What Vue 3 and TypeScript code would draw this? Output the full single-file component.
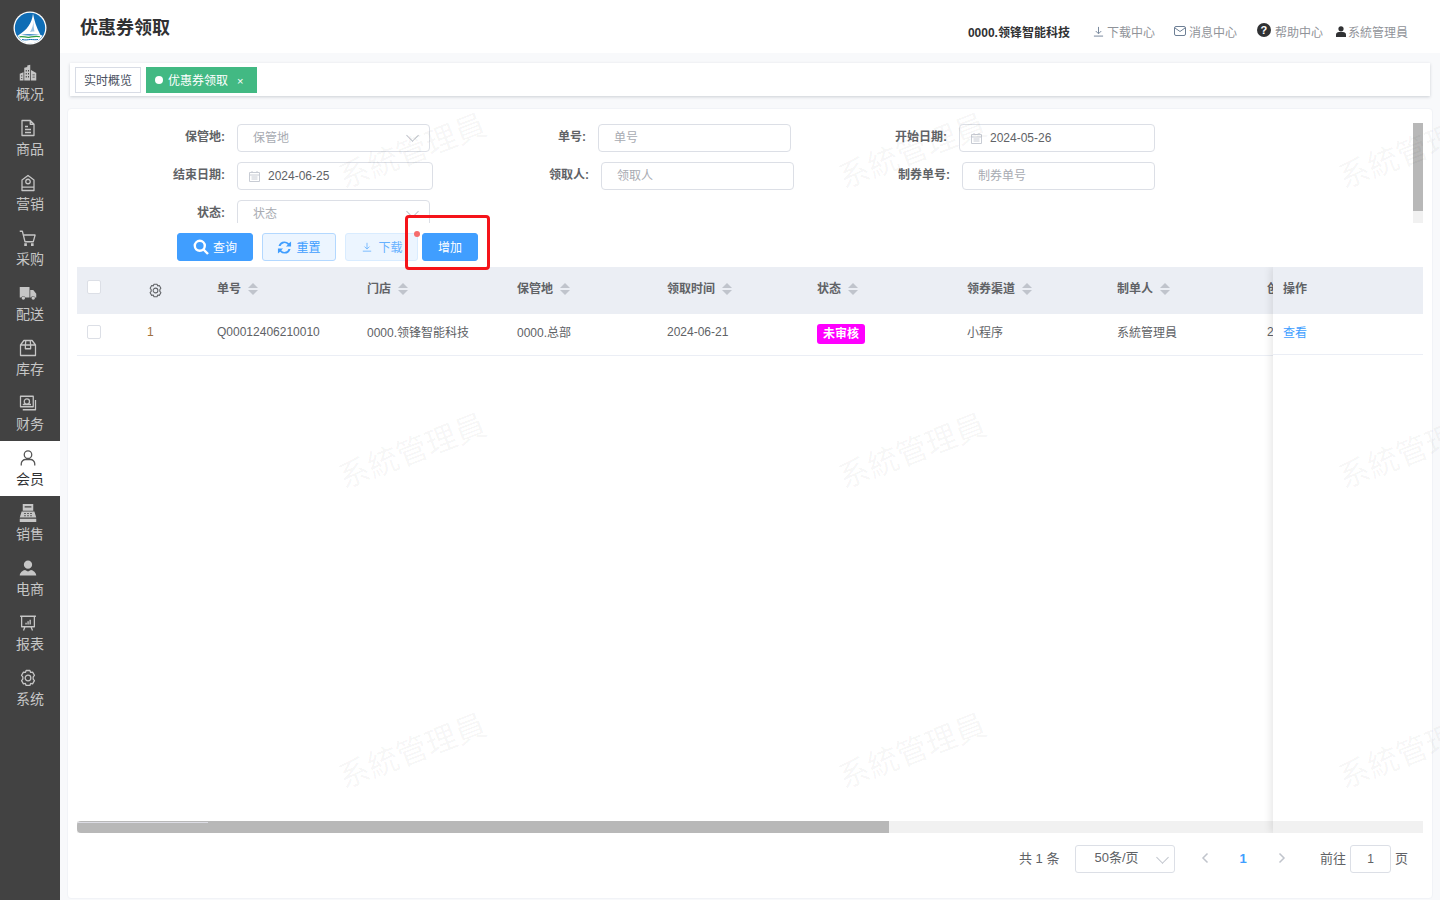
<script setup lang="ts">
interface Shape { d: string; mode: 'stroke' | 'fill' | 'hole' }
interface NavItem { label: string; shapes: Shape[]; active?: boolean }

const s = (d: string): Shape => ({ d, mode: 'stroke' })
const f = (d: string): Shape => ({ d, mode: 'fill' })
const h = (d: string): Shape => ({ d, mode: 'hole' })

const gear = 'M9.5 2h5l1 2.6 2.6-.5 2.5 4.3-1.7 2.1v2.9l1.7 2.1-2.5 4.3-2.6-.5-1 2.6h-5l-1-2.6-2.6.5-2.5-4.3 1.7-2.1V10.500L3.400 8.400l2.500-4.300 2.600.5z M12 8.200a3.800 3.800 0 1 0 0 7.600 3.800 3.800 0 0 0 0-7.600z'

const navItems: NavItem[] = [
  { label: '概况', shapes: [
    f('M1 13l5-2v11H1z M7 5l4-1V2l4-1v21H7z M16 8l7 4v10h-7z'),
    h('M9 8h1.300v2H9z M12 8h1.300v2H12z M9 12h1.300v2H9z M12 12h1.300v2H12z M9 16h1.300v2H9z M12 16h1.300v2H12z M3 15h1.300v1.500H3z M3 18.500h1.300V20H3z M18 14h3v1h-3z M18 17h3v1h-3z'),
  ] },
  { label: '商品', shapes: [ s('M4 2h11l5 5v15H4z M15 2v5h5 M8 10h4 M8 14h8 M8 18h8') ] },
  { label: '营销', shapes: [ s('M4 8l8-6 8 6v14H4z M4 17.500h16'), s('M12 7a3 3 0 1 0 0 6 3 3 0 0 0 0-6z') ] },
  { label: '采购', shapes: [ s('M1 3h3.500L8 17h11l2.500-9H6'), f('M7 19h3.500v3.500H7z M16 19h3.500v3.500H16z') ] },
  { label: '配送', shapes: [
    f('M1 4h13v14H8.500a3 3 0 0 0-5.500 0H1z M15 8h4l4 5v5h-1.500a3 3 0 0 0-5.500 0h-1z'),
    f('M5.800 16.500a2.300 2.300 0 1 0 0 4.600 2.300 2.300 0 0 0 0-4.600z M19 16.500a2.300 2.300 0 1 0 0 4.600 2.300 2.300 0 0 0 0-4.600z'),
  ] },
  { label: '库存', shapes: [ s('M6.500 2h11L22 8v14H2V8z M2 8h20 M9 2.500L8.500 8v5h7V8L15 2.500') ] },
  { label: '财务', shapes: [ s('M2 3h17v14H2z M5 21h17V8'), s('M10.500 6.500a3 3 0 1 0 0 7 3 3 0 0 0 0-7z M5 14h11') ] },
  { label: '会员', active: true, shapes: [ s('M12 2.500a5 5 0 1 0 0 10 5 5 0 0 0 0-10z M3 22v-2.500c0-3 3-5.500 5.500-5.500h7c2.500 0 5.500 2.500 5.500 5.500V22') ] },
  { label: '销售', shapes: [
    f('M5 0h14v9H5z M3.500 10h17L23 18H1z M1 19.500h22V24H1z'),
    h('M7.500 3h9v1.500h-9z M7 12h2v1.300H7z M11 12h2v1.300h-2z M15 12h2v1.300h-2z M7 15h2v1.300H7z M11 15h2v1.300h-2z M15 15h2v1.300h-2z'),
  ] },
  { label: '电商', shapes: [ f('M12 2a5.500 5.500 0 1 0 0 11 5.500 5.500 0 0 0 0-11z M1 22c0-4 4-7 7-7.500l4 2 4-2c3 .5 7 3.500 7 7.500z') ] },
  { label: '报表', shapes: [ s('M1.500 3h21 M3.500 3v14h17V3 M8 17l-2 5 M16 17l2 5'), f('M8.500 11.500h1.800V14H8.500z M11.200 9.500H13V14h-1.800z M14 7.500h1.800V14H14z') ] },
  { label: '系统', shapes: [ s(gear) ] },
]

const columns: string[] = ['单号', '门店', '保管地', '领取时间', '状态', '领券渠道', '制单人', '创建时间']
const watermarks: number[] = Array.from({ length: 9 }, (_, i) => i)
</script>

<template>
  <div class="app">
    <aside class="sidebar">
      <div class="logo">
        <svg width="34" height="34" viewBox="0 0 34 34">
          <circle cx="17" cy="17" r="16.500" fill="#fff" />
          <circle cx="17" cy="17" r="15.200" fill="#0f6db5" />
          <path d="M20 2.500C19 12 14 19 5 24.500c7-1.500 15-1.500 22.500-.5C23.500 17 21 9 20 2.500z" fill="#fff" />
          <path d="M20.500 9c0 5-1.500 9-3.500 12 2-.5 3-.5 4.500-.5-1-3.500-1-8-1-11.500z" fill="#9cc3e2" />
          <path d="M4.500 24.500c5-1 8 0 12 0s8-1 13 0c-2.500 5-7 8-12.500 8S7 29 4.500 24.500z" fill="#fff" />
          <path d="M6.500 25.800c4-1 6 1 9.500.5s7-1.700 11-.5" fill="none" stroke="#2f9e44" stroke-width="1.200" />
          <path d="M9 28.500c4 1 6 0 8.500 0s5 .5 7.500 0" fill="none" stroke="#0f6db5" stroke-width="1" />
        </svg>
      </div>
      <div v-for="item in navItems" :key="item.label" class="nav-item" :class="{ active: item.active }">
        <svg class="nav-icon" width="18" height="18" viewBox="0 0 24 24">
          <path v-for="(shape, i) in item.shapes" :key="i" :d="shape.d" :class="shape.mode" />
        </svg>
        <span class="nav-label">{{ item.label }}</span>
      </div>
    </aside>

    <main class="main">
      <header class="topbar">
        <h1 class="title">优惠券领取</h1>
        <div class="top-actions">
          <span class="org">0000.领锋智能科技</span>
          <span class="action a-download">
            <svg width="11" height="11" viewBox="0 0 12 12" fill="none" stroke="#6d7f95" stroke-width="1"><path d="M6 1v7M3 5.500L6 8.500l3-3M1 11h10" /></svg>
            下载中心
          </span>
          <span class="action a-message">
            <svg width="12" height="10" viewBox="0 0 12 10" fill="none" stroke="#6d7f95" stroke-width="1"><rect x=".5" y=".5" width="11" height="9" rx="1.500" /><path d="M1 2l5 3.500L11 2" /></svg>
            消息中心
          </span>
          <span class="action a-help">
            <span class="help-icon">?</span>
            帮助中心
          </span>
          <span class="action a-user">
            <svg width="10" height="11" viewBox="0 0 10 11" fill="#303133"><circle cx="5" cy="2.800" r="2.600" /><path d="M0 11V8.500C0 7 1.500 6 3 6h4c1.500 0 3 1 3 2.500V11z" /></svg>
            系統管理員
          </span>
        </div>
      </header>

      <nav class="tags">
        <span class="tag">实时概览</span>
        <span class="tag tag-on"><i class="dot"></i>优惠券领取<b class="close">×</b></span>
      </nav>

      <section class="card">
        <div class="filter-wrap">
          <form class="filter" @submit.prevent>
            <div class="f-row">
              <label class="f-label w148">保管地:</label>
              <div class="field w193"><span class="ph">保管地</span><i class="chev"></i></div>
              <label class="f-label w156">单号:</label>
              <div class="field w193"><span class="ph">单号</span></div>
              <label class="f-label w156">开始日期:</label>
              <div class="field w196 date">
                <svg class="cal" width="11" height="11" viewBox="0 0 11 11" fill="none" stroke="#c8ccd4"><path d="M.5 1.500h10v9H.5z M.5 4h10 M3 0v2 M8 0v2 M2.500 6h6 M2.500 8h6" /></svg>
                <span class="val">2024-05-26</span>
              </div>
            </div>
            <div class="f-row">
              <label class="f-label w148">结束日期:</label>
              <div class="field w196 date">
                <svg class="cal" width="11" height="11" viewBox="0 0 11 11" fill="none" stroke="#c8ccd4"><path d="M.5 1.500h10v9H.5z M.5 4h10 M3 0v2 M8 0v2 M2.500 6h6 M2.500 8h6" /></svg>
                <span class="val">2024-06-25</span>
              </div>
              <label class="f-label w156">领取人:</label>
              <div class="field w193"><span class="ph">领取人</span></div>
              <label class="f-label w156">制券单号:</label>
              <div class="field w193"><span class="ph">制券单号</span></div>
            </div>
            <div class="f-row">
              <label class="f-label w148">状态:</label>
              <div class="field w193"><span class="ph">状态</span><i class="chev"></i></div>
            </div>
          </form>
          <div class="vbar"><div class="vthumb"></div></div>
        </div>

        <div class="buttons">
          <button class="btn primary b-search" type="button">
            <svg width="16" height="16" viewBox="0 0 16 16" fill="none" stroke="#fff" stroke-width="2.400"><circle cx="6.800" cy="6.800" r="5" /><path d="M10.500 10.500L15 15" /></svg>
            <span>查询</span>
          </button>
          <button class="btn plain b-reset" type="button">
            <svg width="15" height="15" viewBox="0 0 16 16" fill="#409eff"><path d="M8 1.500a6.500 6.500 0 0 1 4.700 2L15 1.500V7H9.500l2-2A4.400 4.400 0 0 0 3.800 6.500H1.600A6.500 6.500 0 0 1 8 1.500z M8 14.500a6.500 6.500 0 0 1-4.700-2L1 14.500V9h5.500l-2 2a4.400 4.400 0 0 0 7.700-1.500h2.200A6.500 6.500 0 0 1 8 14.500z" /></svg>
            <span>重置</span>
          </button>
          <button class="btn faint b-down" type="button">
            <svg width="10" height="10" viewBox="0 0 12 12" fill="none" stroke="#66b1ff" stroke-width="1"><path d="M6 1v7M3 5.500L6 8.500l3-3M1 11h10" /></svg>
            <span>下载</span>
          </button>
          <button class="btn primary b-add" type="button"><span>增加</span></button>
          <span class="highlight"></span>
          <span class="red-dot"></span>
        </div>

        <div class="table">
          <div class="t-scroll">
            <div class="t-head">
              <div class="c-check"><span class="box head-box"></span></div>
              <div class="c-idx">
                <svg width="15" height="15" viewBox="0 0 24 24" fill="none" stroke="#606266" stroke-width="1.700" stroke-linejoin="round"><path :d="gear" /></svg>
              </div>
              <div v-for="col in columns" :key="col" class="c-col th">
                <span>{{ col }}</span><i class="sort"></i>
              </div>
            </div>
            <div class="t-row">
              <div class="c-check"><span class="box row-box"></span></div>
              <div class="c-idx num">1</div>
              <div class="c-col">Q00012406210010</div>
              <div class="c-col">0000.领锋智能科技</div>
              <div class="c-col">0000.总部</div>
              <div class="c-col">2024-06-21</div>
              <div class="c-col"><span class="status">未审核</span></div>
              <div class="c-col">小程序</div>
              <div class="c-col">系統管理員</div>
              <div class="c-col">2024-06-21</div>
            </div>
          </div>
          <div class="hbar"><div class="hthumb"></div></div>
          <div class="fixed">
            <div class="fx-head">操作</div>
            <div class="fx-row"><a class="link">查看</a></div>
          </div>
        </div>

        <div class="pager">
          <span class="p-text">共 1 条</span>
          <div class="p-select"><span>50条/页</span><i class="chev small"></i></div>
          <span class="p-btn">
            <svg width="8" height="12" viewBox="0 0 8 12" fill="none" stroke="#c0c4cc" stroke-width="1.500"><path d="M6.500 1.500L2 6l4.500 4.500" /></svg>
          </span>
          <span class="p-btn p-num">1</span>
          <span class="p-btn">
            <svg width="8" height="12" viewBox="0 0 8 12" fill="none" stroke="#c0c4cc" stroke-width="1.500"><path d="M1.500 1.500L6 6l-4.500 4.500" /></svg>
          </span>
          <span class="p-text p-go">前往</span>
          <div class="p-input">1</div>
          <span class="p-text p-page">页</span>
        </div>
      </section>
    </main>

    <div class="watermarks" aria-hidden="true">
      <div v-for="n in watermarks" :key="n" class="wm-cell"><span class="wm">系統管理員</span></div>
    </div>
  </div>
</template>

<style>
html, body { margin: 0; overflow: hidden; }
</style>

<style scoped>
.app {
  position: relative;
  display: flex;
  width: 1440px;
  height: 900px;
  overflow: hidden;
  font-family: "Liberation Sans", "Noto Sans CJK SC", sans-serif;
  font-size: 12px;
  color: #606266;
}
.sidebar { width: 60px; flex: none; background: #424242; display: flex; flex-direction: column; }
.logo { height: 56px; display: flex; justify-content: center; padding-top: 11px; box-sizing: border-box; }
.nav-item { height: 55px; box-sizing: border-box; padding-top: 8px; display: flex; flex-direction: column; align-items: center; }
.nav-item.active { background: #fff; }
.nav-icon { margin-right: 4px; display: block; }
.nav-label { font-size: 14px; line-height: 20px; margin-top: 2px; color: #c6c6c6; }
.active .nav-label { color: #303133; }
.nav-icon .stroke { fill: none; stroke: #c6c6c6; stroke-width: 1.700; stroke-linejoin: round; }
.nav-icon .fill { fill: #c6c6c6; }
.nav-icon .hole { fill: #424242; }
.active .nav-icon .stroke { stroke: #555; }

.main { flex: 1; min-width: 0; display: flex; flex-direction: column; background: #f8f9fb; }
.topbar { height: 53px; flex: none; background: #fff; display: flex; justify-content: space-between; padding: 0 32px 0 20px; }
.title { margin: 18px 0 0; font-size: 18px; line-height: 20px; font-weight: 700; color: #303133; }
.top-actions { display: flex; align-items: center; padding-top: 10px; height: 42px; color: #909399; }
.org { font-weight: 700; color: #303133; margin-right: 23px; }
.action { display: flex; align-items: center; gap: 3px; }
.a-message { margin-left: 19px; }
.a-help { margin-left: 20px; gap: 4px; }
.a-user { margin-left: 13px; gap: 2px; }
.help-icon {
  width: 14px; height: 14px; border-radius: 50%; background: #303133; color: #fff; font-size: 11px; font-weight: 700;
  line-height: 14px; text-align: center; margin-top: -2px;
}

.tags {
  margin: 10px 10px 0; height: 33px; flex: none; background: #fff; padding: 4px 5px; box-sizing: border-box;
  display: flex; gap: 5px; box-shadow: 0 1px 3px rgba(0, 21, 41, .18);
}
.tag { height: 26px; line-height: 26px; box-sizing: border-box; border: 1px solid #d8dce5; padding: 0 8px; color: #495060; }
.tag-on { background: #42b983; border: 0; color: #fff; display: flex; align-items: center; padding: 2px 14px 0 9px; }
.dot { width: 8px; height: 8px; border-radius: 50%; background: #fff; margin: -2px 5px 0 0; }
.close { font-weight: 400; font-size: 11px; margin-left: 9px; }

.card {
  margin: 12px 7px 1px; flex: 1; min-height: 0; background: #fff; border: 1px solid #f1f3f7; border-radius: 4px;
  padding: 14px 9px 0; display: flex; flex-direction: column;
}
.filter-wrap { display: flex; height: 100px; overflow: hidden; flex: none; }
.filter { width: 1336px; padding-top: 1px; display: flex; flex-direction: column; gap: 10px; }
.f-row { display: flex; height: 28px; flex: none; }
.f-label { font-weight: 700; text-align: right; margin-right: 12px; line-height: 27px; }
.w148 { width: 148px; }
.w156 { width: 156px; }
.w193 { width: 193px; }
.w196 { width: 196px; }
.field {
  height: 28px; box-sizing: border-box; border: 1px solid #dcdfe6; border-radius: 4px; padding: 0 15px;
  display: flex; align-items: center; position: relative; line-height: 26px;
}
.date { padding-left: 11px; gap: 8px; }
.cal { flex: none; }
.ph { color: #a8abb2; }
.val { color: #606266; }
.chev { position: absolute; right: 12px; top: 6px; width: 8px; height: 8px; border-right: 1px solid #c0c4cc; border-bottom: 1px solid #c0c4cc; transform: rotate(45deg); }
.vbar { width: 10px; flex: none; background: #f1f1f1; }
.vthumb { height: 88px; background: #b8b8b8; }

.buttons { position: relative; z-index: 3; display: flex; margin: 10px 0 0 100px; height: 28px; flex: none; }
.btn {
  height: 28px; box-sizing: border-box; border-radius: 3px; font: inherit; padding: 0; display: flex; align-items: center;
  justify-content: center; gap: 4px; cursor: pointer;
}
.btn span { margin-top: -2px; }
.primary { background: #409eff; border: 1px solid #409eff; color: #fff; }
.plain { background: #ecf5ff; border: 1px solid #b3d8ff; color: #409eff; }
.faint { background: #ecf5ff; border: 1px solid #d9ecff; color: #66b1ff; gap: 6px; padding-left: 2px; }
.b-search { width: 76px; }
.b-reset { width: 74px; margin-left: 9px; }
.b-down { width: 73px; margin-left: 9px; }
.b-add { width: 56px; margin-left: 4px; }
.highlight { position: absolute; left: 228px; top: -18px; width: 85px; height: 55px; box-sizing: border-box; border: 3px solid #f5141a; border-radius: 4px; }
.red-dot { position: absolute; left: 237px; top: -2px; width: 6px; height: 6px; border-radius: 50%; background: #f56c6c; }

.table { position: relative; margin-top: 6px; height: 566px; flex: none; overflow: hidden; display: flex; flex-direction: column; }
.t-scroll { flex: 1; min-height: 0; overflow: hidden; }
.t-head, .t-row { display: flex; width: 1500px; }
.t-head { height: 47px; background: #ebeef4; align-items: center; }
.t-row { height: 41px; border-bottom: 1px solid #ebeef5; align-items: center; width: 1346px; overflow: hidden; }
.c-check { width: 61px; flex: none; padding-left: 10px; box-sizing: border-box; }
.c-idx { width: 69px; flex: none; padding-left: 10px; box-sizing: border-box; display: flex; }
.num { color: #a0703c; padding-left: 9px; margin-top: -6px; }
.c-col { width: 150px; flex: none; padding-left: 10px; box-sizing: border-box; white-space: nowrap; display: flex; align-items: center; }
.t-row .c-col { margin-top: -6px; }
.th { font-weight: 700; margin-top: -6px; }
.box { display: block; width: 14px; height: 14px; box-sizing: border-box; border: 1px solid #dcdfe6; border-radius: 2px; background: #fff; }
.head-box { margin-top: -7px; }
.row-box { margin-top: -6px; }
.sort { position: relative; width: 10px; height: 12px; margin: 2px 0 0 7px; }
.sort::before, .sort::after { content: ""; position: absolute; left: 0; border-left: 5px solid transparent; border-right: 5px solid transparent; }
.sort::before { top: 0; border-bottom: 5px solid #c0c4cc; }
.sort::after { bottom: 0; border-top: 5px solid #c0c4cc; }
.status { background: #ff00ff; color: #fff; font-weight: 700; height: 20px; line-height: 20px; border-radius: 3px; padding: 0 6px; margin-top: 4px; }

.hbar { position: relative; height: 12px; flex: none; background: #f1f1f1; }
.hthumb { width: 812px; height: 12px; background: #b8b8b8; border-radius: 4px 0 0 4px; }
.hbar::after { content: ""; position: absolute; left: 1px; top: 1px; width: 130px; height: 1px; background: #dcdce4; }
.fixed {
  position: absolute; right: 0; top: 0; bottom: 0; width: 150px; background: #fff;
  box-shadow: -2px 0 8px rgba(0, 0, 0, .1);
}
.fixed::after { content: ""; position: absolute; left: 0; right: 0; bottom: 0; height: 12px; background: #f1f1f1; }
.fx-head { height: 47px; background: #ebeef4; padding-left: 10px; box-sizing: border-box; font-weight: 700; line-height: 45px; }
.fx-row { height: 41px; padding-left: 10px; box-sizing: border-box; border-bottom: 1px solid #ebeef5; line-height: 38px; }
.link { color: #409eff; }

.pager { display: flex; justify-content: flex-end; align-items: center; height: 28px; margin-top: 12px; padding-right: 15px; font-size: 13px; }
.p-text { padding-bottom: 4px; }
.p-select {
  position: relative; width: 100px; height: 28px; box-sizing: border-box; border: 1px solid #dcdfe6; border-radius: 3px;
  margin-left: 16px; margin-right: 10px; padding-left: 18px; line-height: 24px;
}
.chev.small { right: 7px; top: 7px; }
.p-btn { width: 38.500px; text-align: center; display: flex; justify-content: center; align-items: center; padding-bottom: 2px; }
.p-num { color: #409eff; font-weight: 700; }
.p-go { margin-left: 19px; }
.p-input {
  width: 41px; height: 28px; box-sizing: border-box; border: 1px solid #dcdfe6; border-radius: 3px; text-align: center;
  line-height: 26px; margin-left: 4px; font-size: 12px;
}
.p-page { margin-left: 4px; }

.watermarks {
  position: absolute; left: 162px; top: 2px; display: grid; grid-template-columns: repeat(3, 500px); grid-auto-rows: 300px;
  pointer-events: none;
}
.wm-cell { display: flex; align-items: center; justify-content: center; }
.wm { font-size: 31px; line-height: 36px; white-space: nowrap; color: rgba(0, 0, 0, .045); transform: rotate(-21deg); }
</style>
